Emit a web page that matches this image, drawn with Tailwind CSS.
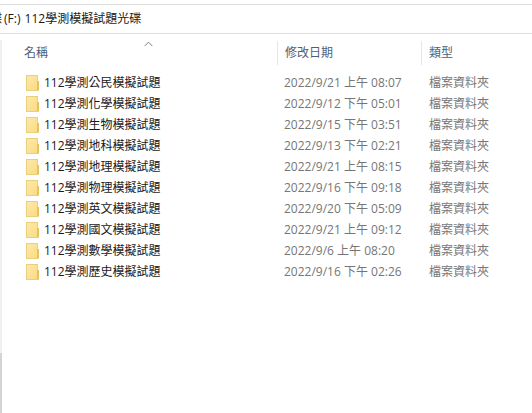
<!DOCTYPE html>
<html lang="zh-Hant">
<head>
    <meta charset="UTF-8">
    <title>112學測模擬試題光碟</title>
    <script src="https://cdn.jsdelivr.net/npm/@tailwindcss/browser@4"></script>
</head>
<body class="bg-white">
    <div class="w-[532px] h-[413px] overflow-hidden flex flex-col text-[12px] font-['Open_Sans','Noto_Sans_CJK_TC',sans-serif]">
        <!-- Address bar -->
        <div class="mt-[4px] h-[30px] shrink-0 border-y border-[#dfdfdf] flex items-center text-[#1a1a1a] whitespace-nowrap">
            <span class="ml-[-10px] mr-[2px]">碟</span>
            <span class="[word-spacing:1px]">(F:) 112學測模擬試題光碟</span>
        </div>

        <div class="flex-1 flex">
            <!-- Left edge scrollbar -->
            <div class="w-[2px] mt-[6px] bg-[#f0f0f0] flex flex-col justify-end">
                <div class="h-[60px] bg-[#d4d4d4]"></div>
            </div>

            <div class="flex-1">
                <!-- Column headers -->
                <div class="relative h-[24px] mt-[7px] flex text-[#4c607a]">
                    <svg class="absolute left-[142px] top-0" width="9" height="6" viewBox="0 0 9 6" fill="none" stroke="#7a7a7a" stroke-width="1"><path d="M.7 5 4.5 1.2 8.3 5"/></svg>
                    <div class="w-[275px] pl-[22px] pt-[3px]">名稱</div>
                    <div class="w-[144px] pl-[7px] pt-[3px] border-l border-[#e5e5e5]">修改日期</div>
                    <div class="flex-1 pl-[7px] pt-[3px] border-l border-[#e5e5e5]">類型</div>
                </div>

                <!-- Folder rows -->
                <div id="rows" class="mt-[7px]">
                    <div class="h-[21px] flex items-center">
                        <svg class="ml-[24px] mr-[5px]" width="13" height="16" viewBox="0 0 13 16"><defs><linearGradient id="f" x1="0" y1="0" x2="1" y2="1"><stop offset="0" stop-color="#fde9ad"/><stop offset="1" stop-color="#fadb80"/></linearGradient></defs><rect x=".5" y=".5" width="11" height="15" fill="url(#f)" stroke="#eccf7a"/><path d="M11 6h2v9.5h-2z" fill="#e8c25e"/></svg>
                        <span class="w-[240px] text-[#1a1a1a]">112學測公民模擬試題</span>
                        <span class="w-[145px] text-[#767676]">2022/9/21 上午 08:07</span>
                        <span class="text-[#767676]">檔案資料夾</span>
                    </div>
                    <div class="h-[21px] flex items-center">
                        <svg class="ml-[24px] mr-[5px]" width="13" height="16" viewBox="0 0 13 16"><rect x=".5" y=".5" width="11" height="15" fill="url(#f)" stroke="#eccf7a"/><path d="M11 6h2v9.5h-2z" fill="#e8c25e"/></svg>
                        <span class="w-[240px] text-[#1a1a1a]">112學測化學模擬試題</span>
                        <span class="w-[145px] text-[#767676]">2022/9/12 下午 05:01</span>
                        <span class="text-[#767676]">檔案資料夾</span>
                    </div>
                    <div class="h-[21px] flex items-center">
                        <svg class="ml-[24px] mr-[5px]" width="13" height="16" viewBox="0 0 13 16"><rect x=".5" y=".5" width="11" height="15" fill="url(#f)" stroke="#eccf7a"/><path d="M11 6h2v9.5h-2z" fill="#e8c25e"/></svg>
                        <span class="w-[240px] text-[#1a1a1a]">112學測生物模擬試題</span>
                        <span class="w-[145px] text-[#767676]">2022/9/15 下午 03:51</span>
                        <span class="text-[#767676]">檔案資料夾</span>
                    </div>
                    <div class="h-[21px] flex items-center">
                        <svg class="ml-[24px] mr-[5px]" width="13" height="16" viewBox="0 0 13 16"><rect x=".5" y=".5" width="11" height="15" fill="url(#f)" stroke="#eccf7a"/><path d="M11 6h2v9.5h-2z" fill="#e8c25e"/></svg>
                        <span class="w-[240px] text-[#1a1a1a]">112學測地科模擬試題</span>
                        <span class="w-[145px] text-[#767676]">2022/9/13 下午 02:21</span>
                        <span class="text-[#767676]">檔案資料夾</span>
                    </div>
                    <div class="h-[21px] flex items-center">
                        <svg class="ml-[24px] mr-[5px]" width="13" height="16" viewBox="0 0 13 16"><rect x=".5" y=".5" width="11" height="15" fill="url(#f)" stroke="#eccf7a"/><path d="M11 6h2v9.5h-2z" fill="#e8c25e"/></svg>
                        <span class="w-[240px] text-[#1a1a1a]">112學測地理模擬試題</span>
                        <span class="w-[145px] text-[#767676]">2022/9/21 上午 08:15</span>
                        <span class="text-[#767676]">檔案資料夾</span>
                    </div>
                    <div class="h-[21px] flex items-center">
                        <svg class="ml-[24px] mr-[5px]" width="13" height="16" viewBox="0 0 13 16"><rect x=".5" y=".5" width="11" height="15" fill="url(#f)" stroke="#eccf7a"/><path d="M11 6h2v9.5h-2z" fill="#e8c25e"/></svg>
                        <span class="w-[240px] text-[#1a1a1a]">112學測物理模擬試題</span>
                        <span class="w-[145px] text-[#767676]">2022/9/16 下午 09:18</span>
                        <span class="text-[#767676]">檔案資料夾</span>
                    </div>
                    <div class="h-[21px] flex items-center">
                        <svg class="ml-[24px] mr-[5px]" width="13" height="16" viewBox="0 0 13 16"><rect x=".5" y=".5" width="11" height="15" fill="url(#f)" stroke="#eccf7a"/><path d="M11 6h2v9.5h-2z" fill="#e8c25e"/></svg>
                        <span class="w-[240px] text-[#1a1a1a]">112學測英文模擬試題</span>
                        <span class="w-[145px] text-[#767676]">2022/9/20 下午 05:09</span>
                        <span class="text-[#767676]">檔案資料夾</span>
                    </div>
                    <div class="h-[21px] flex items-center">
                        <svg class="ml-[24px] mr-[5px]" width="13" height="16" viewBox="0 0 13 16"><rect x=".5" y=".5" width="11" height="15" fill="url(#f)" stroke="#eccf7a"/><path d="M11 6h2v9.5h-2z" fill="#e8c25e"/></svg>
                        <span class="w-[240px] text-[#1a1a1a]">112學測國文模擬試題</span>
                        <span class="w-[145px] text-[#767676]">2022/9/21 上午 09:12</span>
                        <span class="text-[#767676]">檔案資料夾</span>
                    </div>
                    <div class="h-[21px] flex items-center">
                        <svg class="ml-[24px] mr-[5px]" width="13" height="16" viewBox="0 0 13 16"><rect x=".5" y=".5" width="11" height="15" fill="url(#f)" stroke="#eccf7a"/><path d="M11 6h2v9.5h-2z" fill="#e8c25e"/></svg>
                        <span class="w-[240px] text-[#1a1a1a]">112學測數學模擬試題</span>
                        <span class="w-[145px] text-[#767676]">2022/9/6 上午 08:20</span>
                        <span class="text-[#767676]">檔案資料夾</span>
                    </div>
                    <div class="h-[21px] flex items-center">
                        <svg class="ml-[24px] mr-[5px]" width="13" height="16" viewBox="0 0 13 16"><rect x=".5" y=".5" width="11" height="15" fill="url(#f)" stroke="#eccf7a"/><path d="M11 6h2v9.5h-2z" fill="#e8c25e"/></svg>
                        <span class="w-[240px] text-[#1a1a1a]">112學測歷史模擬試題</span>
                        <span class="w-[145px] text-[#767676]">2022/9/16 下午 02:26</span>
                        <span class="text-[#767676]">檔案資料夾</span>
                    </div>
                </div>
            </div>
        </div>
    </div>
</body>
</html>
